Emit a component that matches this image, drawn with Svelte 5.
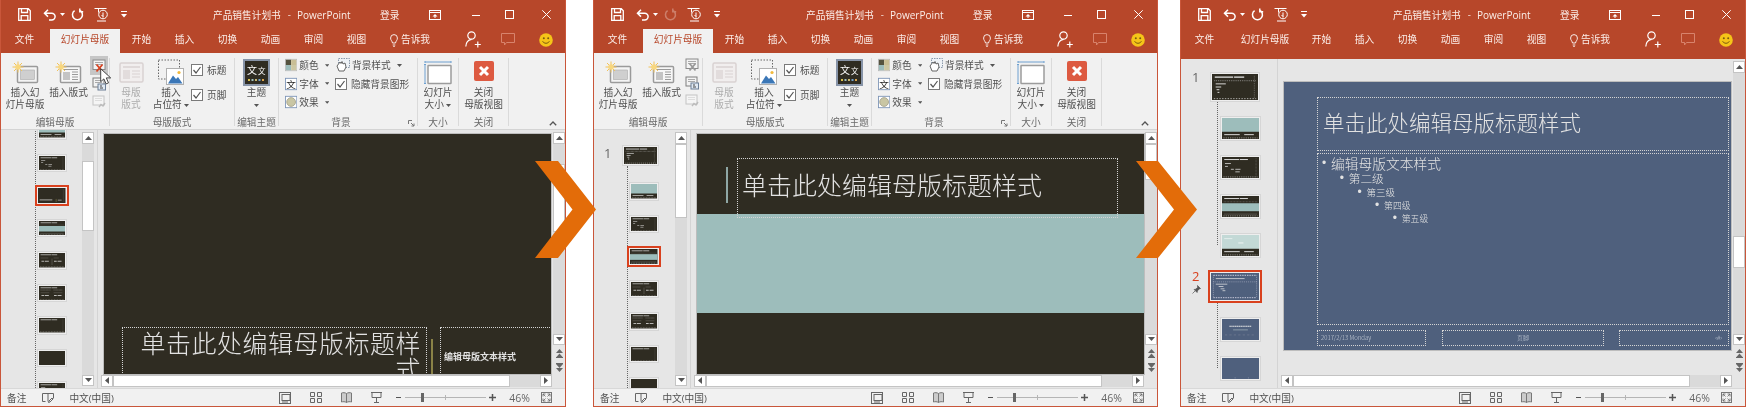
<script>
  const DARK = '#2f2c22', TEAL = '#9dbdbb', BLUE = '#4f607d', PALE = '#c3d9d6';
  const W = '#e8e8e8';
  const head = { d: 'M6 7h40M48 7h22', c: W, w: 2.5 };
  const rim = { d: 'M4 55h92', c: W, w: 1.5, dash: '3 3' };
  const side = { d: 'M92 4v50', c: '#aaa', w: 1, dash: '2 2' };
  const arts = {
    master: { bg: DARK, bands: [], marks: [head, { d: 'M5 15h90', c: '#bbb', w: 1.5, dash: '2 2' }, { d: 'M8 22h22M8 29h12M10 35h6M12 41h4', c: W, w: 2 }, rim, side] },
    tealTop: { bg: DARK, bands: [{ y: 0, h: 38, c: TEAL }], marks: [{ d: 'M6 46h42M60 46h26', c: W, w: 2.5 }, rim] },
    content: { bg: DARK, bands: [], marks: [head, { d: 'M8 18h16M8 26h8M24 34h8M36 34h14M36 41h12', c: W, w: 2 }, rim, side] },
    bottom: { bg: DARK, bands: [], marks: [{ d: 'M6 46h46', c: W, w: 2.5 }, { d: 'M66 42v12', c: '#8a8247', w: 2 }, { d: 'M72 47h14', c: W, w: 2 }, side] },
    banner: { bg: DARK, bands: [{ y: 20, h: 22, c: TEAL }], marks: [head, { d: 'M5 16h90', c: '#bbb', w: 1, dash: '2 2' }, { d: 'M5 50h90', c: '#999', w: 1 }, rim] },
    two: { bg: DARK, bands: [], marks: [head, { d: 'M6 20h30M56 20h20', c: '#aaa', w: 1 }, { d: 'M10 33h10M24 33h14M58 33h10M72 33h14', c: W, w: 4, dash: '3 1' }, { d: 'M50 22v26', c: '#bbb', w: 1 }, rim] },
    compare: { bg: DARK, bands: [], marks: [head, { d: 'M6 16h38M56 16h34', c: '#ccc', w: 1.5, dash: '2 1' }, { d: 'M6 27h34M56 27h34', c: '#aaa', w: 1 }, { d: 'M10 38h10M24 38h14M58 38h10M72 38h14', c: W, w: 4, dash: '3 1' }, rim] },
    title: { bg: DARK, bands: [], marks: [head, rim, side] },
    blank: { bg: DARK, bands: [], marks: [] },
    paleTop: { bg: DARK, bands: [{ y: 0, h: 38, c: PALE }], marks: [{ d: 'M6 10h22', c: '#fff', w: 1.5 }, { d: 'M44 22h14', c: '#fff', w: 2 }, { d: 'M6 46h42M60 46h26', c: W, w: 2.5 }, rim] },
    blueMaster: { bg: BLUE, bands: [], marks: [{ d: 'M5 5h90', c: '#ccd', w: 2, dash: '3 2' }, { d: 'M10 12h60', c: W, w: 1.5 }, { d: 'M5 19h90', c: '#ccd', w: 1, dash: '2 2' }, { d: 'M10 24h24M16 29h10M20 34h8M24 38h6', c: W, w: 1.5 }, { d: 'M5 53h90', c: '#ccd', w: 2, dash: '3 2' }, { d: 'M5 5v48M95 5v48', c: '#ccd', w: 1, dash: '2 2' }] },
    blueTitle: { bg: BLUE, bands: [], marks: [{ d: 'M20 20h60', c: W, w: 3, dash: '4 1' }, { d: 'M30 30h40', c: '#bcc', w: 1.5 }, { d: 'M8 44h84', c: '#99a', w: 1, dash: '6 6' }] },
    blueBlank: { bg: BLUE, bands: [], marks: [{ d: 'M34 55h3M70 55h3', c: '#ccd', w: 1 }] }
  };

  const tabs = [['文件', 'file'], ['幻灯片母版', 'master'], ['开始', ''], ['插入', ''], ['切换', ''], ['动画', ''], ['审阅', ''], ['视图', '']];
  const levels = [
    { t: '编辑母版文本样式', fs: 13.75, lh: 16 },
    { t: '第二级', fs: 11.7, lh: 14 },
    { t: '第三级', fs: 9.5, lh: 14 },
    { t: '第四级', fs: 8.8, lh: 13 },
    { t: '第五级', fs: 8.8, lh: 13 }
  ];
  const windows = [
    {
      id: 'w1', ribbon: true, hover: true, redo: true, paneThumb: [17, 70], mainThumb: [20, 68], slide: 'a',
      groups: [{ thumbs: [['tealTop'], ['content'], ['bottom', true], ['banner'], ['two'], ['compare'], ['title'], ['blank'], ['content']] }]
    },
    {
      id: 'w2', ribbon: true, hover: false, redo: false, paneThumb: [0, 74], mainThumb: [0, 36], slide: 'b',
      groups: [{ num: '1', master: 'master', thumbs: [['tealTop'], ['content'], ['banner', true], ['two'], ['compare'], ['title'], ['blank']] }]
    },
    {
      id: 'w3', ribbon: false, hover: false, redo: true, paneThumb: null, mainThumb: [163, 32], slide: 'c',
      groups: [
        { num: '1', master: 'master', thumbs: [['tealTop'], ['content'], ['banner'], ['paleTop']] },
        { num: '2', master: 'blueMaster', sel: true, pin: true, thumbs: [['blueTitle'], ['blueBlank']] }
      ]
    }
  ];
</script>

{#snippet art(kind)}
  <svg class="art" viewBox="0 0 100 58" preserveAspectRatio="none">
    <rect width="100" height="58" fill={arts[kind].bg} />
    {#each arts[kind].bands as b}<rect y={b.y} width="100" height={b.h} fill={b.c} />{/each}
    {#each arts[kind].marks as m}<path d={m.d} stroke={m.c} stroke-width={m.w} stroke-dasharray={m.dash} fill="none" />{/each}
  </svg>
{/snippet}

{#snippet caret()}
  <svg class="caret" width="5" height="3" viewBox="0 0 5 3"><path d="M0 0h5L2.5 3z" fill="currentColor" /></svg>
{/snippet}

{#snippet sun(x, y)}
  <g transform="translate({x} {y})" stroke="#f2c35a" stroke-width="1">
    <path d="M0-5.5V5.5M-5.5 0H5.5M-4-4L4 4M-4 4L4-4" />
    <circle r="2.8" fill="#f8d77e" stroke="none" />
  </g>
{/snippet}

{#snippet check()}
  <svg class="chk" width="12" height="12" viewBox="0 0 12 12"><rect x=".5" y=".5" width="11" height="11" fill="#fff" stroke="#7a7a7a" /><path d="M2.5 6l2.5 3 4.5-6" fill="none" stroke="#555" stroke-width="1.2" /></svg>
{/snippet}

{#snippet vbtn(up)}
  <div class="sbtn"><svg width="7" height="4" viewBox="0 0 7 4"><path d={up ? 'M0 4h7L3.5 0z' : 'M0 0h7L3.5 4z'} fill="#555" /></svg></div>
{/snippet}

{#snippet thumb(kind, sel)}
  <div class="thumb" class:sel><div class="inner">{@render art(kind)}</div></div>
{/snippet}

{#snippet ribbon(win)}
  <div class="ribbon">
    <section class="group g1">
      <div class="row">
        <div class="big b1">
          <svg class="ico" width="27" height="23" viewBox="0 0 27 23"><rect x="5.5" y="5.5" width="20" height="16" rx="1" fill="#f4f4f4" stroke="#9a9a9a" stroke-width="1.5" /><rect x="8.5" y="9" width="14" height="9.5" fill="#cfcfcf" stroke="#aaa" stroke-width=".6" />{@render sun(6, 6)}</svg>
          <span>插入幻</span><span>灯片母版</span>
        </div>
        <div class="big b2">
          <svg class="ico" width="27" height="23" viewBox="0 0 27 23"><rect x="5.5" y="5.5" width="20" height="16" rx="1" fill="#f7f7f7" stroke="#9a9a9a" stroke-width="1.5" /><rect x="8" y="11" width="7" height="8" fill="#c4c4c4" /><path d="M17 11h6M17 13.5h6M17 16h6M17 18.5h6M8 8.5h15" stroke="#9a9a9a" />{@render sun(6, 6)}</svg>
          <span>插入版式</span>
        </div>
        <div class="smalls">
          <div class="sm" class:hot={win.hover}>
            <svg width="14" height="14" viewBox="0 0 14 14"><rect x="1" y="1" width="12" height="9.5" fill="#f3f3f3" stroke="#8a8a8a" /><path d="M3 3.5h8M3 5.5h8" stroke="#aaa" /><path d="M4.5 5.5l6 7M10.5 5.5l-6 7" stroke={win.hover ? '#d9411e' : '#999'} stroke-width="1.8" /></svg>
          </div>
          <div class="sm">
            <svg width="14" height="14" viewBox="0 0 14 14"><rect x="1" y="1" width="11" height="9" fill="#f3f3f3" stroke="#7f7f7f" /><path d="M3 3.5h7M3 5.5h7" stroke="#aaa" /><rect x="6" y="7" width="7.5" height="6" fill="#dfe8f2" stroke="#6c7f96" /><path d="M8 9h2M8 11h3" stroke="#444" /></svg>
          </div>
          <div class="sm">
            <svg width="14" height="14" viewBox="0 0 14 14"><rect x="1" y="1" width="11" height="9" fill="#f5f5f5" stroke="#c4c4c4" /><path d="M3 3.5h7M3 5.5h7" stroke="#ddd" /><path d="M7 12l2-2.5 2 1.5 2-3" stroke="#bbb" stroke-width="1.4" fill="none" /></svg>
          </div>
        </div>
      </div>
      <div class="label">编辑母版</div>
    </section>

    <section class="group g2">
      <div class="row">
        <div class="big b3 off">
          <svg class="ico" width="25" height="21" viewBox="0 0 25 21"><rect x="1" y="1" width="23" height="19" rx="1.5" fill="#f1eeee" stroke="#d9d2d2" stroke-width="1.5" /><path d="M4 5h17" stroke="#d9d2d2" stroke-width="1.5" /><rect x="4" y="8" width="7" height="9" fill="#e2dcdc" /><path d="M13 9h8M13 12h8M13 15h8" stroke="#d9d2d2" /></svg>
          <span>母版</span><span>版式</span>
        </div>
        <div class="big b4">
          <svg class="ico" width="26" height="26" viewBox="0 0 26 26"><rect x=".5" y=".5" width="21" height="19" fill="none" stroke="#666" stroke-dasharray="1.5 1.5" /><rect x="8.5" y="9" width="17" height="16" fill="#fff" stroke="#b0b0b0" /><circle cx="21" cy="13" r="1.6" fill="#f2b93b" /><path d="M10 24l5-8 3 3.5 2-2 4.5 6.500z" fill="#3b77b7" /></svg>
          <span>插入</span><span>占位符 {@render caret()}</span>
        </div>
        <div class="checks">
          <div class="ck">{@render check()}<span>标题</span></div>
          <div class="ck">{@render check()}<span>页脚</span></div>
        </div>
      </div>
      <div class="label">母版版式</div>
    </section>

    <section class="group g3">
      <div class="row">
        <div class="big b5">
          <svg class="ico" width="27" height="27" viewBox="0 0 27 27">
            <rect x="1" y="1" width="25" height="25" fill={DARK} stroke="#8794a8" stroke-width="2" />
            <text x="4" y="15" font-size="10" fill="#fff" font-family="Noto Sans CJK SC">文</text>
            <text x="15" y="15" font-size="7.5" fill="#fff" font-family="Noto Sans CJK SC">文</text>
            <path d="M5 21h2" stroke="#d8c04a" stroke-width="2" /><path d="M8.500 21h2" stroke="#9dbdbb" stroke-width="2" /><path d="M12 21h2" stroke="#c9b66c" stroke-width="2" /><path d="M15.500 21h2" stroke="#6f9fc9" stroke-width="2" /><path d="M19 21h2" stroke="#d8a24a" stroke-width="2" />
          </svg>
          <span>主题</span><span class="cline">{@render caret()}</span>
        </div>
      </div>
      <div class="label">编辑主题</div>
    </section>

    <section class="group g4">
      <div class="row">
        <div class="lists">
          <div class="li">
            <svg width="14" height="14" viewBox="0 0 14 14"><rect x=".5" y=".5" width="13" height="13" fill="#fff" stroke="#bbb" /><rect x="1" y="1" width="6" height="6" fill="#55533f" /><rect x="7" y="1" width="6" height="6" fill="#c9bf95" /><rect x="1" y="7" width="6" height="6" fill="#9dbdbb" /><rect x="7" y="7" width="6" height="6" fill="#cdc8a3" /></svg>
            <span>颜色</span>{@render caret()}
          </div>
          <div class="li">
            <svg width="14" height="14" viewBox="0 0 14 14"><rect x=".5" y=".5" width="13" height="13" fill="#fff" stroke="#7b93b5" /><text x="1.500" y="11.500" font-size="11" fill="#222" font-family="Noto Sans CJK SC">文</text></svg>
            <span>字体</span>{@render caret()}
          </div>
          <div class="li">
            <svg width="14" height="14" viewBox="0 0 14 14"><rect x=".5" y=".5" width="13" height="13" fill="#fff" stroke="#7b93b5" /><circle cx="7" cy="7" r="5" fill="#c9c6a4" stroke="#a3a08a" /></svg>
            <span>效果</span>{@render caret()}
          </div>
        </div>
        <div class="lists l2">
          <div class="li">
            <svg width="15" height="14" viewBox="0 0 15 14"><rect x="3.500" y=".5" width="11" height="9" fill="#eef2f6" stroke="#8a99aa" stroke-dasharray="1.5 1" /><path d="M2 8l3-4 1 1.500 1-2 1 2.500 2-1 1 4-2 4H4z" fill="#fff" stroke="#555" stroke-width=".9" /></svg>
            <span>背景样式</span>{@render caret()}
          </div>
          <div class="li ckli">{@render check()}<span>隐藏背景图形</span></div>
        </div>
      </div>
      <div class="label">背景</div>
      <svg class="launch" width="7" height="7" viewBox="0 0 7 7"><path d="M.5 4V.5H4M3 3l3 3M6 3.500V6H3.500" fill="none" stroke="#777" /></svg>
    </section>

    <section class="group g5">
      <div class="row">
        <div class="big b6">
          <svg class="ico" width="28" height="24" viewBox="0 0 28 24"><path d="M1 1.500h26M1 .5v2M27 .5v2M1 4v19M0 4h2M0 23h2" stroke="#6ea0d0" fill="none" /><rect x="4" y="5" width="23" height="18" rx=".5" fill="#fff" stroke="#9c9c9c" stroke-width="1.5" /></svg>
          <span>幻灯片</span><span>大小 {@render caret()}</span>
        </div>
      </div>
      <div class="label">大小</div>
    </section>

    <section class="group g6">
      <div class="row">
        <div class="big b7">
          <svg class="ico closeico" width="20" height="20" viewBox="0 0 20 20"><rect width="20" height="20" rx="2" fill="#dd5a41" /><path d="M6 6l8 8M14 6l-8 8" stroke="#fff" stroke-width="3" /></svg>
          <span>关闭</span><span>母版视图</span>
        </div>
      </div>
      <div class="label">关闭</div>
    </section>

    <svg class="collapse" width="8" height="5" viewBox="0 0 8 5"><path d="M.8 4.200L4 1l3.200 3.200" fill="none" stroke="#555" stroke-width="1.3" /></svg>
  </div>
{/snippet}

{#snippet slideA()}
  <div class="slide dark">
    <div class="box a-title">单击此处编辑母版标题样式</div>
    <div class="a-rule"></div>
    <div class="box a-body">编辑母版文本样式</div>
  </div>
{/snippet}

{#snippet slideB()}
  <div class="slide dark">
    <div class="b-band"></div>
    <div class="b-rule"></div>
    <div class="box b-title">单击此处编辑母版标题样式</div>
  </div>
{/snippet}

{#snippet slideC()}
  <div class="slide blue">
    <div class="box c-title">单击此处编辑母版标题样式</div>
    <div class="box c-body">
      {#each levels as l, i}
        <div class="lvl" style="padding-left:{5 + i * 17.7}px;font-size:{l.fs}px;line-height:{l.lh}px"><i>•</i>{l.t}</div>
      {/each}
    </div>
    <div class="box foot f1">2017/2/13 Monday</div>
    <div class="box foot f2">页脚</div>
    <div class="box foot f3">‹#›</div>
  </div>
{/snippet}

<main class="sheet">
  {#each windows as win}
    <article class="win {win.id}">
      <header class="titlebar">
        <div class="qat">
          <svg class="q-save" width="13" height="13" viewBox="0 0 13 13"><path d="M.7.7h9.600l2 2v9.600H.7zM3.500.7v3.800h6V.7M3.200 12.300V7.700h6.600v4.600" fill="none" stroke="#fff" stroke-width="1.3" /></svg>
          <svg class="q-undo" width="14" height="12" viewBox="0 0 14 12"><path d="M5 .8L1.500 4.200 5 7.600M1.500 4.200h7.200a3.400 3.400 0 0 1 0 6.800H6" fill="none" stroke="#fff" stroke-width="1.5" /></svg>
          <span class="q-caret">{@render caret()}</span>
          <svg class="q-redo" class:dim={!win.redo} width="13" height="13" viewBox="0 0 13 13"><path d="M8.600 2.200a5 5 0 1 1-5 .4M8.800.4v3.400H12.200" fill="none" stroke="#fff" stroke-width="1.5" /></svg>
          <svg class="q-touch" width="16" height="15" viewBox="0 0 16 15"><path d="M.5 1.500h12M4.500 1.500v4M3 14h9" fill="none" stroke="#fff" /><circle cx="9" cy="7.500" r="4.300" fill="none" stroke="#fff" /><path d="M9 5.500v5M7.500 8l1.500 1.500" fill="none" stroke="#fff" /></svg>
          <svg class="q-more" width="6" height="7" viewBox="0 0 6 7"><path d="M0 .5h6" stroke="#fff" /><path d="M0 3h6L3 6.500z" fill="#fff" /></svg>
        </div>
        <div class="doc"><span>产品销售计划书</span><span class="dash">-</span><span class="app">PowerPoint</span></div>
        <div class="login">登录</div>
        <svg class="restore" width="12" height="10" viewBox="0 0 12 10"><rect x=".5" y=".5" width="11" height="9" fill="none" stroke="#fff" /><path d="M.5 2.500h11" stroke="#fff" /><path d="M3.500 6.500L6 4l2.500 2.500z" fill="#fff" /><path d="M6 6v2" stroke="#fff" /></svg>
        <svg class="ctl c-min" width="8" height="8" viewBox="0 0 8 8"><path d="M0 4.500h8" stroke="#fff" /></svg>
        <svg class="ctl c-max" width="9" height="9" viewBox="0 0 9 9"><rect x=".5" y=".5" width="8" height="8" fill="none" stroke="#fff" /></svg>
        <svg class="ctl c-x" width="9" height="9" viewBox="0 0 9 9"><path d="M.3.3l8.400 8.400M8.700.3L.3 8.700" stroke="#fff" /></svg>
      </header>

      <nav class="tabbar">
        {#each tabs as [label, key]}
          <div class="tab {key}" class:active={win.ribbon && key === 'master'}>{label}</div>
        {/each}
        <svg class="bulb" width="8" height="13" viewBox="0 0 8 13"><path d="M2.500 9C2.200 7 .6 6.400.6 4a3.400 3.400 0 0 1 6.800 0C7.400 6.400 5.800 7 5.500 9zM2.700 11h2.600M3.300 12.500h1.400" fill="none" stroke="#fff" stroke-width=".9" /></svg>
        <div class="tell">告诉我</div>
        <svg class="person" width="17" height="17" viewBox="0 0 17 17"><circle cx="6.500" cy="4.500" r="3.700" fill="none" stroke="#fff" stroke-width="1.2" /><path d="M.8 15.500C1 11.500 3 9 6.500 8.400M12.800 10.500v6M9.800 13.500h6" fill="none" stroke="#fff" stroke-width="1.2" /></svg>
        <svg class="comment" width="14" height="13" viewBox="0 0 14 13"><path d="M.5.5h13v9H5.500l-2 2.500v-2.500h-3z" fill="none" stroke="#d8836c" /></svg>
        <svg class="smile" width="14" height="14" viewBox="0 0 14 14"><circle cx="7" cy="7" r="6.800" fill="#f5c518" /><circle cx="4.800" cy="5.200" r="1" fill="#7a5b10" /><circle cx="9.200" cy="5.200" r="1" fill="#7a5b10" /><path d="M3.600 8.300c1.500 2.600 5.300 2.600 6.800 0" fill="none" stroke="#7a5b10" /></svg>
      </nav>

      {#if win.ribbon}{@render ribbon(win)}{/if}

      <div class="body">
        <aside class="pane">
          <div class="thumbs">
            {#each win.groups as g}
              {#if g.master}
                <div class="mrow" class:sel={g.sel}>
                  <div class="num" class:red={g.sel}>
                    <span>{g.num}</span>
                    {#if g.pin}
                      <svg class="pin" width="9" height="9" viewBox="0 0 9 9"><path d="M5.500.5l3 3-1.300.4-1.800 2-.3 1.600-3-3 1.600-.3 2-1.800zM3 6L.5 8.500" fill="#555" stroke="#555" stroke-width=".7" /></svg>
                    {/if}
                  </div>
                  <div class="master">{@render thumb(g.master, g.sel)}</div>
                </div>
              {/if}
              <div class="tree">
                {#each g.thumbs as [kind, sel]}{@render thumb(kind, sel)}{/each}
              </div>
            {/each}
          </div>
          {#if win.paneThumb}
            <div class="vbar panebar">
              {@render vbtn(true)}
              <div class="track"><div class="sthumb" style="margin-top:{win.paneThumb[0]}px;height:{win.paneThumb[1]}px"></div></div>
              {@render vbtn(false)}
            </div>
          {/if}
        </aside>

        <div class="editor">
          <div class="leftcol">
            <div class="canvas">
              {#if win.slide === 'a'}{@render slideA()}{:else if win.slide === 'b'}{@render slideB()}{:else}{@render slideC()}{/if}
            </div>
            <div class="hbar">
              <div class="sbtn"><svg width="4" height="7" viewBox="0 0 4 7"><path d="M4 0v7L0 3.500z" fill="#555" /></svg></div>
              <div class="hthumb"></div>
              <div class="htrack"></div>
              <div class="sbtn"><svg width="4" height="7" viewBox="0 0 4 7"><path d="M0 0v7l4-3.500z" fill="#555" /></svg></div>
            </div>
          </div>
          <div class="vbar mainbar">
            {@render vbtn(true)}
            <div class="track"><div class="sthumb" style="margin-top:{win.mainThumb[0]}px;height:{win.mainThumb[1]}px"></div></div>
            {@render vbtn(false)}
            <div class="nav">
              <svg width="9" height="10" viewBox="0 0 9 10"><path d="M1 5L4.500 1 8 5zM1 9.500L4.500 5.500 8 9.500z" fill="#666" /><path d="M1 9.500h7" stroke="#666" /></svg>
              <svg width="9" height="10" viewBox="0 0 9 10"><path d="M1 .5h7" stroke="#666" /><path d="M1 1L4.500 5 8 1zM1 5l3.500 4L8 5z" fill="#666" /></svg>
            </div>
          </div>
        </div>
      </div>

      <footer class="status">
        <span class="st-note">备注</span>
        <svg class="st-nico" width="12" height="12" viewBox="0 0 12 12"><path d="M6 1.500H.5v8h3M6 1.500h5.500v5M6 1.500v8" fill="none" stroke="#666" /><path d="M7 9l3-3 1 1-3 3-1.500.5z" fill="none" stroke="#666" /></svg>
        <span class="st-lang">中文(中国)</span>
        <div class="st-right">
          <svg width="12" height="12" viewBox="0 0 12 12"><rect x=".5" y=".5" width="11" height="11" fill="none" stroke="#666" /><rect x="3" y="2.500" width="8" height="6" fill="none" stroke="#666" /><path d="M3 10h6" stroke="#666" /></svg>
          <svg class="gap1" width="12" height="11" viewBox="0 0 12 11"><path d="M.5.5h4v4h-4zM7.500.5h4v4h-4zM.5 6.500h4v4h-4zM7.500 6.500h4v4h-4z" fill="none" stroke="#666" /></svg>
          <svg class="gap1" width="11" height="11" viewBox="0 0 11 11"><path d="M5.500 1.500C4 .5 2 .5.500 1v9c1.500-.5 3.500-.5 5 .5 1.500-1 3.500-1 5-.5V1C9 .5 7 .5 5.500 1.500zM5.500 1.500v9" fill="#ccc" stroke="#777" /></svg>
          <svg class="gap1" width="11" height="11" viewBox="0 0 11 11"><path d="M0 .5h11M1 .5h9v5H1zM5.500 5.500V10M3 10.500h5" fill="none" stroke="#666" /></svg>
          <div class="zoomer">
            <b class="zm"></b>
            <div class="slider"><i class="knob"></i><i class="tick"></i></div>
            <svg width="7" height="7" viewBox="0 0 7 7"><path d="M0 3.500h7M3.500 0v7" stroke="#555" stroke-width="1.500" /></svg>
          </div>
          <span class="pct">46%</span>
          <svg class="fit" width="11" height="11" viewBox="0 0 11 11"><rect x=".5" y=".5" width="10" height="10" fill="none" stroke="#777" /><path d="M2 2l2.500 2.500M2 4.500V2h2.500M9 2L6.500 4.500M9 4.500V2H6.500M2 9l2.500-2.500M2 6.500V9h2.500M9 9L6.500 6.500M9 6.500V9H6.500" fill="none" stroke="#666" stroke-width=".8" /></svg>
        </div>
      </footer>

      {#if win.hover}
        <svg class="cursor" width="12" height="17" viewBox="0 0 12 17"><path d="M.7.7v13l3.200-2.800 2.200 5 2.400-1-2.200-5h4.400z" fill="#fff" stroke="#333" stroke-width=".9" /></svg>
      {/if}
    </article>
  {/each}

  <svg class="chev ch1" width="62" height="98" viewBox="0 0 62 98"><path d="M0 0h23l38 48.500L23 97H0L37.500 48.500z" fill="#e36c09" /></svg>
  <svg class="chev ch2" width="62" height="98" viewBox="0 0 62 98"><path d="M0 0h22l39 48.500L22 97H0L38 48.500z" fill="#e36c09" /></svg>
</main>

<style>
  :global(body) { margin: 0; background: #fff; }
  .sheet {
    position: relative;
    display: flex;
    width: 1746px;
    height: 407px;
    overflow: hidden;
    font-family: "Open Sans", "Noto Sans CJK SC", sans-serif;
    font-size: 9.7px;
    color: #505050;
    background: #fff;
  }
  .win {
    position: relative;
    flex: none;
    box-sizing: border-box;
    width: 566px;
    height: 407px;
    display: flex;
    flex-direction: column;
    border: 1px solid #c9563a;
    border-top: none;
    background: #e6e6e6;
    filter: blur(.3px);
  }
  .w2 { width: 565px; margin-left: 27px; }
  .w3 { margin-left: 22px; }

  /* title bar */
  .titlebar { flex: none; height: 29px; display: flex; align-items: center; background: #b7472a; color: #fbeee9; }
  .qat { width: 212px; box-sizing: border-box; padding-left: 17px; display: flex; align-items: center; flex: none; color: #fff; }
  .q-undo { margin-left: 12px; }
  .q-caret { margin-left: 3px; display: flex; }
  .q-caret .caret { color: #fff; }
  .q-redo { margin-left: 6px; }
  .q-redo.dim { opacity: .3; }
  .q-touch { margin-left: 10px; }
  .q-more { margin-left: 11px; }
  .doc { display: flex; align-items: center; width: 167px; flex: none; }
  .app { font-size: 10px; }
  .dash { margin: 0 6px 0 7px; }
  .login { width: 49px; flex: none; }
  .restore { flex: none; }
  .ctl { flex: none; }
  .c-min { margin-left: auto; }
  .c-max { margin-left: 25px; }
  .c-x { margin-left: 28px; margin-right: 14px; }

  /* tab bar */
  .tabbar { flex: none; height: 24px; display: flex; align-items: flex-start; padding-left: 2px; background: #b7472a; color: #fbeee9; }
  .w3 .tabbar { height: 30px; }
  .tab { width: 43px; height: 24px; line-height: 22px; text-align: center; flex: none; }
  .tab.file { margin-right: 4px; }
  .tab.master { width: 70px; }
  .tab.active { background: #f1f1f1; color: #b7472a; }
  .bulb { margin: 5px 0 0 12px; flex: none; }
  .tell { margin-left: 3px; line-height: 22px; }
  .person { margin: 2px 0 0 auto; flex: none; }
  .comment { margin: 4px 0 0 19px; flex: none; }
  .smile { margin: 4px 12px 0 24px; flex: none; }

  /* ribbon */
  .ribbon { flex: none; height: 77px; display: flex; box-sizing: border-box; background: #f1f1f1; border-bottom: 1px solid #d4d4d4; }
  .group { position: relative; display: flex; flex-direction: column; margin: 5px 0 3px; box-sizing: border-box; border-right: 1px solid #dadada; flex: none; }
  .row { flex: 1; display: flex; min-height: 0; }
  .label { flex: none; height: 12px; line-height: 12px; text-align: center; color: #6a6a6a; margin-bottom: -3px; }
  .g1 { width: 109px; }
  .g2 { width: 125px; }
  .g3 { width: 44px; }
  .g4 { width: 139px; }
  .g4 .label { padding-right: 14px; }
  .g5 { width: 41px; }
  .g6 { width: 50px; }
  .big { display: flex; flex-direction: column; align-items: center; flex: none; line-height: 12px; white-space: nowrap; }
  .big .ico { height: 29px; flex: none; display: block; }
  .b1 { width: 48px; } .b2 { width: 39px; }
  .b3 { width: 34px; margin-left: 4px; color: #adadad; }
  .b4 { width: 38px; margin-left: 4px; }
  .b5 { width: 43px; } .b6 { width: 40px; } .b7 { width: 49px; }
  .big .closeico { margin-top: 3px; margin-bottom: 6px; height: 20px; }
  .cline { display: flex; height: 12px; align-items: center; }
  .caret { vertical-align: middle; color: #555; }
  .smalls { width: 18px; margin: -2px 0 0 2px; flex: none; display: flex; flex-direction: column; }
  .sm { width: 18px; height: 18px; display: flex; align-items: center; justify-content: center; }
  .sm.hot { background: #c6c6c6; height: 19px; }
  .checks { margin-left: 1px; padding-top: 6px; display: flex; flex-direction: column; gap: 13px; }
  .ck { display: flex; align-items: center; gap: 4px; height: 12px; }
  .lists { display: flex; flex-direction: column; gap: 4.500px; margin-left: 6px; width: 44px; flex: none; }
  .l2 { margin-left: 6px; width: 80px; gap: 5px; }
  .li { display: flex; align-items: center; gap: 2px; height: 14px; white-space: nowrap; }
  .li .caret { margin-left: 4px; }
  .ckli { gap: 4px; }
  .launch { position: absolute; right: 2px; bottom: -1px; }
  .collapse { margin: auto 8px 3px auto; flex: none; }

  /* body */
  .body { flex: 1; min-height: 0; display: flex; }
  .pane { width: 97px; flex: none; box-sizing: border-box; display: flex; border-right: 1px solid #d4d4d4; overflow: hidden; }
  .thumbs { flex: 1; min-width: 0; display: flex; flex-direction: column; overflow: hidden; }
  .w1 .thumbs { margin-top: -9px; }
  .w2 .thumbs { padding-top: 15px; }
  .w3 .thumbs { padding-top: 13px; }
  .mrow { display: flex; flex: none; }
  .num { box-sizing: border-box; flex: none; display: flex; flex-direction: column; font-size: 13px; line-height: 10px; color: #666; }
  .num.red { color: #d9411e; padding-top: 1px; }
  .pin { margin-top: 4px; }
  .w2 .num { width: 28px; padding-left: 10px; padding-top: 3px; }
  .w3 .num { width: 29px; padding-left: 11px; }
  .tree { position: relative; flex: none; display: flex; flex-direction: column; gap: 14px; }
  .tree::before { content: ""; position: absolute; left: 0; top: 0; bottom: 0; border-left: 1px dotted #666; }
  .w1 .tree { margin-left: 34px; padding-left: 2px; }
  .w2 .tree { margin-left: 33px; padding: 16px 0 0 2px; flex: 1; }
  .w3 .tree { margin-left: 36px; padding: 14px 0 0 3px; margin-bottom: 12px; }
  .w3 .tree::before { bottom: 13px; }
  .thumb { position: relative; flex: none; box-sizing: border-box; width: 30px; height: 18.500px; padding: 1px; border: 1px solid #d6d6d6; background: #eee; }
  .inner { width: 100%; height: 100%; }
  .art { display: block; width: 100%; height: 100%; }
  .thumb.sel { width: 33.500px; height: 21px; margin: -1.250px 0 -1.250px -2px; border: 2px solid #d9411e; z-index: 1; }
  .w2 .master .thumb { width: 37px; height: 21px; margin-left: 0; }
  .w3 .tree .thumb { width: 41px; height: 25px; }
  .w3 .master .thumb { width: 50px; height: 30px; }
  .w3 .master .thumb.sel { width: 54px; height: 33px; margin: 0 0 0 -2px; border: 2px solid #d9411e; }

  /* scrollbars */
  .vbar { flex: none; display: flex; flex-direction: column; box-sizing: border-box; padding-top: 2px; }
  .panebar { width: 12px; margin-right: 3px; padding-bottom: 2px; }
  .track { flex: 1; min-height: 0; background: #dadada; }
  .sbtn { flex: none; box-sizing: border-box; width: 12px; height: 11.500px; display: flex; align-items: center; justify-content: center; background: #fff; border: 1px solid #c4c4c4; }
  .sthumb { box-sizing: border-box; background: #fff; border: 1px solid #c4c4c4; }
  .editor { flex: 1; min-width: 0; display: flex; }
  .leftcol { flex: 1; min-width: 0; display: flex; flex-direction: column; }
  .canvas { flex: 1; min-height: 0; padding: 4px 0 1px 6px; overflow: hidden; }
  .w3 .canvas { padding-top: 23px; }
  .hbar { flex: none; height: 12px; display: flex; margin: 0 1px 1px 3px; }
  .hthumb { flex: 1; background: #fff; border: 1px solid #c4c4c4; box-sizing: border-box; }
  .htrack { flex: none; width: 30px; background: #dadada; }
  .mainbar { width: 12px; }
  .nav { flex: none; height: 43px; display: flex; flex-direction: column; align-items: center; gap: 5px; padding-top: 3px; box-sizing: border-box; }

  /* slides */
  .slide { position: relative; width: 447px; height: 100%; overflow: hidden; color: #e2e2e2; font-family: "Noto Sans CJK SC", sans-serif; font-weight: 300; box-shadow: 0 0 0 1px #bdbdbd; }
  .w3 .slide { height: 268px; }
  .dark { background: #2f2c22; }
  .blue { background: #4f607d; }
  .box { position: absolute; box-sizing: border-box; border: 1px dotted #d4d4d4; }
  .a-title { left: 18px; top: 193px; width: 305px; height: 70px; padding: 2px 5px 0 6px; text-align: right; font-size: 25px; letter-spacing: .5px; line-height: 25.500px; }
  .a-rule { position: absolute; left: 327px; top: 205px; width: 2px; height: 40px; background: #8a8247; }
  .a-body { left: 336px; top: 193px; width: 130px; height: 60px; padding: 22px 0 0 3px; font-size: 9px; font-weight: 700; white-space: nowrap; line-height: 14px; }
  .b-band { position: absolute; left: 0; right: 0; top: 80px; height: 99px; background: #9dbdbb; }
  .b-rule { position: absolute; left: 29px; top: 33px; width: 1.500px; height: 36px; background: #8fa7a5; }
  .b-title { left: 40px; top: 24px; width: 381px; height: 60px; padding: 9px 0 0 4px; font-size: 25px; line-height: 32px; white-space: nowrap; }
  .c-title { left: 33px; top: 15px; width: 412px; height: 54px; padding: 10px 0 0 5px; font-size: 21.500px; line-height: 28px; white-space: nowrap; }
  .c-body { left: 33px; top: 71px; width: 412px; height: 172px; padding-top: 1px; }
  .lvl { display: flex; white-space: nowrap; }
  .lvl i { width: 9px; margin-left: -1px; flex: none; font-style: normal; font-size: 12px; font-family: "Liberation Sans", sans-serif; }
  .foot { top: 248px; height: 16px; font-size: 6px; line-height: 14px; color: #c9d0da; }
  .f1 { left: 33px; width: 109px; padding-left: 3px; }
  .f2 { left: 158px; width: 162px; text-align: center; }
  .f3 { left: 335px; width: 110px; text-align: right; padding-right: 6px; }

  /* status */
  .status { flex: none; height: 18px; display: flex; align-items: center; background: #f1f1f1; border-top: 1px solid #d8d8d8; box-sizing: border-box; }
  .st-note { margin-left: 6px; }
  .st-nico { margin-left: 16px; flex: none; }
  .st-lang { margin-left: 15px; }
  .st-right { margin-left: auto; margin-right: 13px; display: flex; align-items: center; }
  .gap1 { margin-left: 19px; }
  .zoomer { display: flex; align-items: center; margin-left: 14px; }
  .zm { width: 5px; height: 1.500px; background: #555; }
  .slider { position: relative; width: 81px; height: 1px; margin: 0 3px 0 4px; background: #b5b5b5; }
  .knob { position: absolute; left: 16px; top: -4px; width: 3px; height: 9px; background: #666; }
  .tick { position: absolute; left: 40px; top: -2px; width: 1px; height: 5px; background: #b5b5b5; }
  .pct { margin-left: 13px; color: #666; font-size: 10.500px; }
  .fit { margin-left: 11px; }

  .cursor { position: absolute; left: 99px; top: 68px; }
  .chev { position: absolute; top: 161px; }
  .ch1 { left: 535px; }
  .ch2 { left: 1136px; }
</style>
